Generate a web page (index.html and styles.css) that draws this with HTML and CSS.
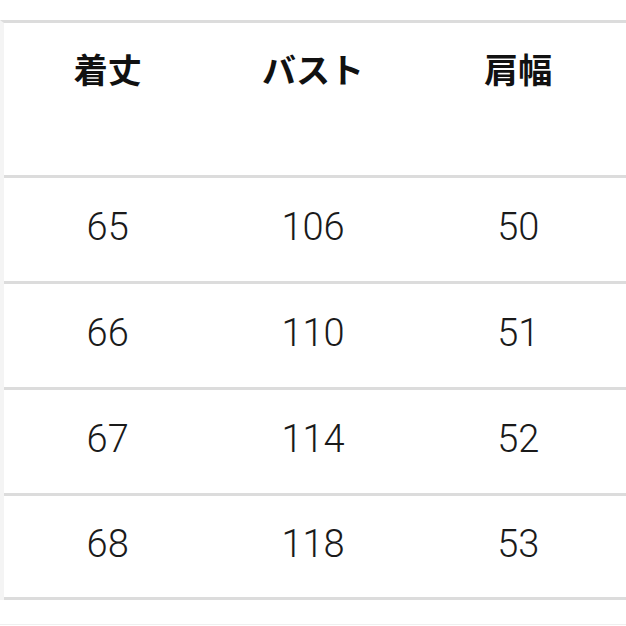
FILE: index.html
```html
<!DOCTYPE html>
<html lang="ja">
<head>
<meta charset="utf-8">
<title>サイズ表</title>
<link rel="stylesheet" href="styles.css">
</head>
<body>
<div class="table">
  <div class="row head">
    <div class="cell">着丈</div>
    <div class="cell">バスト</div>
    <div class="cell">肩幅</div>
  </div>
  <div class="row">
    <div class="cell">65</div>
    <div class="cell">106</div>
    <div class="cell">50</div>
  </div>
  <div class="row">
    <div class="cell">66</div>
    <div class="cell">110</div>
    <div class="cell">51</div>
  </div>
  <div class="row">
    <div class="cell">67</div>
    <div class="cell">114</div>
    <div class="cell">52</div>
  </div>
  <div class="row last">
    <div class="cell">68</div>
    <div class="cell">118</div>
    <div class="cell">53</div>
  </div>
</div>
<div class="tail"></div>
</body>
</html>
```
FILE: styles.css
```css
html, body {
  margin: 0;
  padding: 0;
  background: #ffffff;
}
body {
  padding-top: 20px;
  font-family: "Noto Sans CJK JP", "Noto Sans", sans-serif;
  color: #151515;
}
.table {
  border-top: 3px solid #dcdcdc;
  border-left: 4px solid #f4f4f4;
}
.row {
  display: grid;
  grid-template-columns: repeat(3, 1fr);
  padding: 0 5px 6px 1px;
  height: 97px;
  border-bottom: 3px solid #dcdcdc;
  align-items: center;
}
.row.last {
  height: 95px;
}
.row.head {
  align-items: start;
  height: 123px;
  padding-top: 29px;
  padding-bottom: 0;
}
.cell {
  text-align: center;
  font-family: Roboto, "Noto Sans CJK JP", sans-serif;
  font-size: 38px;
  line-height: 1;
  font-weight: 300;
  color: #1a1a1a;
}
.head .cell {
  font-family: "Noto Sans CJK JP", "Noto Sans", sans-serif;
  font-size: 34px;
  font-weight: 700;
  color: #111111;
}
.tail {
  margin-top: 24px;
  border-top: 1px solid #efefef;
}
```
